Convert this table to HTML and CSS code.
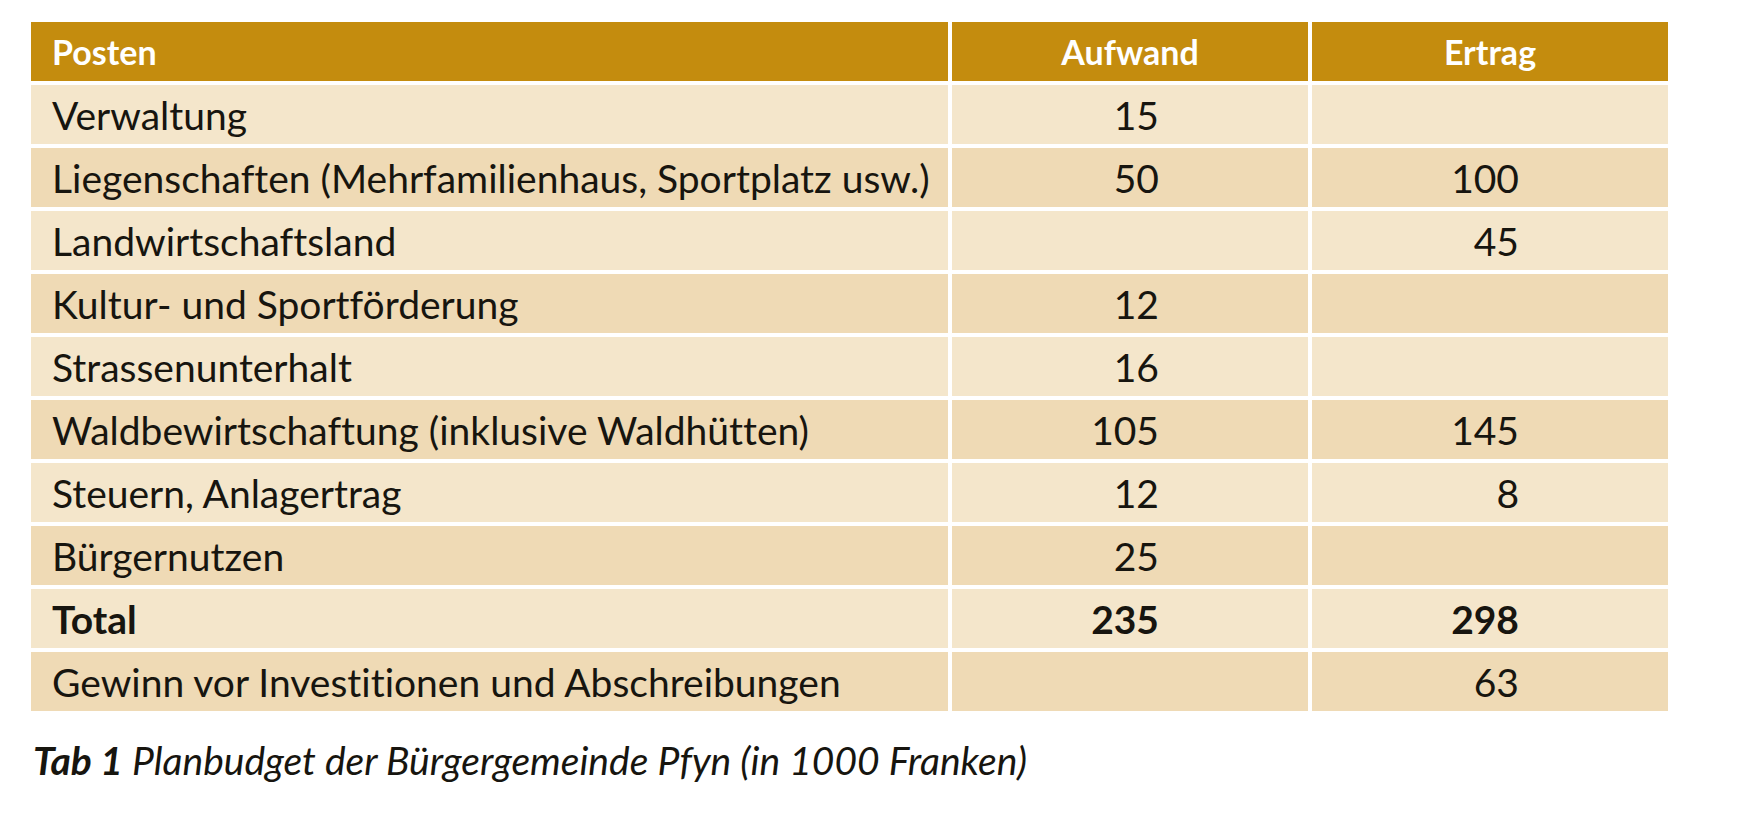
FILE: index.html
```html
<!DOCTYPE html>
<html lang="de">
<head>
<meta charset="utf-8">
<title>Planbudget der Bürgergemeinde Pfyn</title>
<link rel="stylesheet" href="styles.css">
</head>
<body>
<figure class="figure">
  <table class="budget">
    <thead>
      <tr>
        <th class="col-label">Posten</th>
        <th class="col-num">Aufwand</th>
        <th class="col-num">Ertrag</th>
      </tr>
    </thead>
    <tbody>
      <tr class="light"><td class="label">Verwaltung</td><td class="num">15</td><td class="num"></td></tr>
      <tr class="dark"><td class="label">Liegenschaften (Mehrfamilienhaus, Sportplatz usw.)</td><td class="num">50</td><td class="num">100</td></tr>
      <tr class="light"><td class="label">Landwirtschaftsland</td><td class="num"></td><td class="num">45</td></tr>
      <tr class="dark"><td class="label">Kultur- und Sportförderung</td><td class="num">12</td><td class="num"></td></tr>
      <tr class="light"><td class="label">Strassenunterhalt</td><td class="num">16</td><td class="num"></td></tr>
      <tr class="dark"><td class="label">Waldbewirtschaftung (inklusive Waldhütten)</td><td class="num">105</td><td class="num">145</td></tr>
      <tr class="light"><td class="label">Steuern, Anlagertrag</td><td class="num">12</td><td class="num">8</td></tr>
      <tr class="dark"><td class="label">Bürgernutzen</td><td class="num">25</td><td class="num"></td></tr>
      <tr class="light total"><td class="label">Total</td><td class="num">235</td><td class="num">298</td></tr>
      <tr class="dark"><td class="label">Gewinn vor Investitionen und Abschreibungen</td><td class="num"></td><td class="num">63</td></tr>
    </tbody>
  </table>
  <figcaption class="caption"><b class="caption-tag">Tab 1</b> Planbudget der Bürgergemeinde Pfyn (in 1000 Franken)</figcaption>
</figure>
</body>
</html>
```

FILE: styles.css
```css
html, body {
  margin: 0;
  padding: 0;
  background: #ffffff;
}

body {
  font-family: "Lato", "Liberation Sans", sans-serif;
  color: #17150f;
  font-variant-ligatures: no-common-ligatures;
}

.figure {
  margin: 0;
  padding: 18px 0 0 27px;
}

.budget {
  border-collapse: separate;
  border-spacing: 4px;
  width: 1644px;
  table-layout: fixed;
}

.budget th,
.budget td {
  box-sizing: border-box;
  height: 59px;
  padding: 0;
  vertical-align: middle;
  white-space: nowrap;
}

.budget thead th {
  background: #c48c0e;
  color: #ffffff;
  font-size: 34px;
  font-weight: 700;
}

.col-label {
  width: 917px;
  text-align: left;
  padding-left: 21px !important;
}

.col-num {
  width: 356px;
  text-align: center;
}

.budget td {
  font-size: 39px;
  font-weight: 400;
}

.light td {
  background: #f4e6cb;
}

.dark td {
  background: #efdab5;
}

.label {
  padding-left: 21px !important;
}

.num {
  text-align: right;
  padding-right: 149px !important;
}

.total td {
  font-weight: 700;
}

.caption {
  margin: 22px 0 0 6px;
  font-size: 39px;
  font-style: italic;
  color: #17150f;
}

.caption-tag {
  font-weight: 700;
}
```
